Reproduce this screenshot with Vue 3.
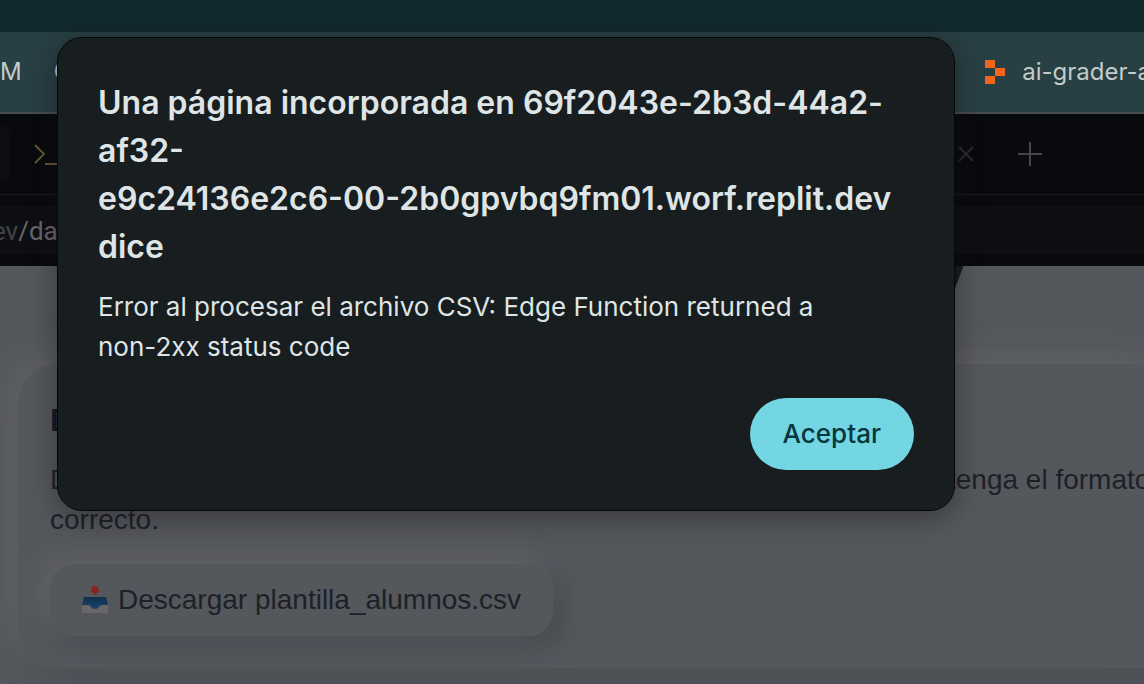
<script setup>
import { ref } from 'vue'

const open = ref(true)
</script>

<template>
  <main class="window">
    <div class="titlebar"></div>
    <nav class="bookmarks" aria-label="Marcadores">
      <a class="bookmark first" href="#">M</a>
      <a class="bookmark second" href="#">C</a>
      <a class="bookmark grader" href="#">
        <svg class="replit" viewBox="0 0 20 24" aria-hidden="true">
          <rect x="0" y="0" width="10" height="8" rx="1" />
          <rect x="10" y="8" width="10" height="8" rx="1" />
          <rect x="0" y="16" width="10" height="8" rx="1" />
        </svg>
        <span>ai-grader-a</span>
      </a>
    </nav>
    <div class="tabs">
      <div class="tab-edge"></div>
      <svg class="shell" viewBox="0 0 28 24" aria-hidden="true">
        <path d="M2 3 L11 12 L2 21 M12 22 H28" />
      </svg>
      <button class="close" type="button" aria-label="Cerrar pestaña">
        <svg viewBox="0 0 16 16"><path d="M1 1 L15 15 M15 1 L1 15" /></svg>
      </button>
      <button class="add" type="button" aria-label="Nueva pestaña">
        <svg viewBox="0 0 24 24"><path d="M12 0 V24 M0 12 H24" /></svg>
      </button>
    </div>
    <div class="address">
      <div class="field">ev<span>/das</span></div>
    </div>
    <section class="page">
      <h1 class="heading">y</h1>
      <article class="card">
        <h2>D</h2>
        <p><span class="lead">D</span><span>tenga el formato</span></p>
        <p>correcto.</p>
        <button class="download" type="button">
          <svg viewBox="0 0 26 28" aria-hidden="true">
            <defs>
              <linearGradient id="tray" x1="0" y1="0" x2="0" y2="1">
                <stop offset="0" stop-color="#142f49" />
                <stop offset="1" stop-color="#18467a" />
              </linearGradient>
            </defs>
            <path d="M2 11 H24 L26 19 V25 H0 V19 Z" fill="url(#tray)" />
            <path d="M0 19 H6 Q8 19 9 21 Q10 23 13 23 Q16 23 17 21 Q18 19 20 19 H26 V27 H0 Z" fill="#6a6866" />
            <path d="M10 0 H16 V4 H18 L13 9 L8 4 H10 Z" fill="#8a2522" />
          </svg>
          <span>Descargar plantilla_alumnos.csv</span>
        </button>
      </article>
    </section>

    <div v-if="open" class="dialog" role="alertdialog" aria-labelledby="title" aria-describedby="message">
      <h2 id="title">Una página incorporada en 69f2043e-2b3d-44a2-af32-<br />e9c24136e2c6-00-2b0gpvbq9fm01.worf.replit.dev dice</h2>
      <p id="message">Error al procesar el archivo CSV: Edge Function returned a non-2xx status code</p>
      <button class="accept" type="button" @click="open = false">Aceptar</button>
    </div>
  </main>
</template>

<style>
body {
  background: #54575c;
}
</style>

<style scoped>
* {
  box-sizing: border-box;
}
h1,
h2,
p {
  margin: 0;
}
button {
  border: 0;
  padding: 0;
  background: none;
  font: inherit;
  color: inherit;
}
svg {
  display: block;
  flex: none;
}
.window {
  position: relative;
  display: flex;
  flex-direction: column;
  min-height: 100vh;
  overflow: hidden;
  font-family: Inter, "Liberation Sans", sans-serif;
}
.titlebar {
  height: 32px;
  background: #12292d;
}
.bookmarks {
  display: flex;
  align-items: center;
  height: 82px;
  background: #283f43;
  border-bottom: 2px solid #484c4e;
  white-space: nowrap;
}
.bookmark {
  display: flex;
  align-items: center;
  font-size: 24px;
  line-height: 32px;
  color: #c3cbcb;
  text-decoration: none;
}
.second {
  margin-left: 32px;
}
.grader {
  gap: 17px;
  margin-left: 914px;
}
.replit {
  width: 20px;
  height: 24px;
  fill: #f4651a;
}
.tabs {
  display: flex;
  align-items: center;
  height: 81px;
  background: #090a0e;
  border-bottom: 1px solid #1a1b1f;
}
.tab-edge {
  width: 10px;
  height: 56px;
  border-radius: 0 8px 8px 0;
  background: #0d0e12;
}
.shell {
  width: 28px;
  height: 24px;
  margin-left: 23px;
  fill: none;
  stroke: #635431;
  stroke-width: 2;
}
.close,
.add {
  stroke: #292a2d;
  stroke-width: 2;
}
.close {
  width: 16px;
  margin-left: 897px;
}
.add {
  width: 24px;
  margin-left: 44px;
  stroke: #46474a;
}
.address {
  padding: 11px 0 12px;
  background: #090a0e;
}
.field {
  height: 48px;
  margin-left: -8px;
  background: #0e0f13;
  font-family: Roboto, sans-serif;
  font-size: 26px;
  line-height: 50px;
  color: #414246;
}
.field span {
  color: #66676a;
}
.page {
  flex: 1;
  background: #54575c;
  color: #1d2127;
  font-family: "Liberation Sans", Arial, sans-serif;
}
.heading {
  height: 98px;
  margin-left: 922px;
  overflow: hidden;
  font-size: 80px;
  line-height: 16px;
  color: #151821;
}
.card {
  margin: 0 -40px 0 18px;
  padding: 36px 0 32px 32px;
  border-radius: 40px;
  background: #54575c;
  box-shadow: -10px -10px 30px #606166, 10px 10px 30px #484b50;
}
.card h2 {
  margin-bottom: 20px;
  font-size: 32px;
  line-height: 40px;
  color: #151821;
}
.card p {
  display: flex;
  font-size: 28px;
  line-height: 40px;
  white-space: nowrap;
}
.lead {
  flex: none;
  width: 898px;
}
.download {
  display: flex;
  align-items: center;
  gap: 10px;
  margin-top: 24px;
  padding: 16px 32px;
  border-radius: 24px;
  background: #54575c;
  box-shadow: -10px -10px 24px #5f6065, 10px 10px 24px #484b50;
  font-size: 28px;
  line-height: 40px;
}
.download svg {
  width: 26px;
  height: 28px;
}
.dialog {
  position: absolute;
  top: 37px;
  left: 57px;
  display: flex;
  flex-direction: column;
  width: 898px;
  max-width: calc(100% - 57px);
  padding: 41px 40px 40px;
  border: 1px solid #050808;
  border-radius: 25px;
  background: #181d1f;
  box-shadow: 0 6px 28px rgba(20, 15, 20, 0.42);
  color: #dfe5e6;
}
.dialog h2 {
  font-size: 32px;
  font-weight: 600;
  line-height: 48px;
}
.dialog p {
  max-width: 780px;
  margin-top: 16px;
  font-size: 26px;
  line-height: 40px;
}
.accept {
  align-self: flex-end;
  margin-top: 31px;
  padding: 16px 33px;
  border-radius: 36px;
  background: #74d6e2;
  font-size: 26px;
  font-weight: 500;
  line-height: 40px;
  color: #05373e;
}
</style>
